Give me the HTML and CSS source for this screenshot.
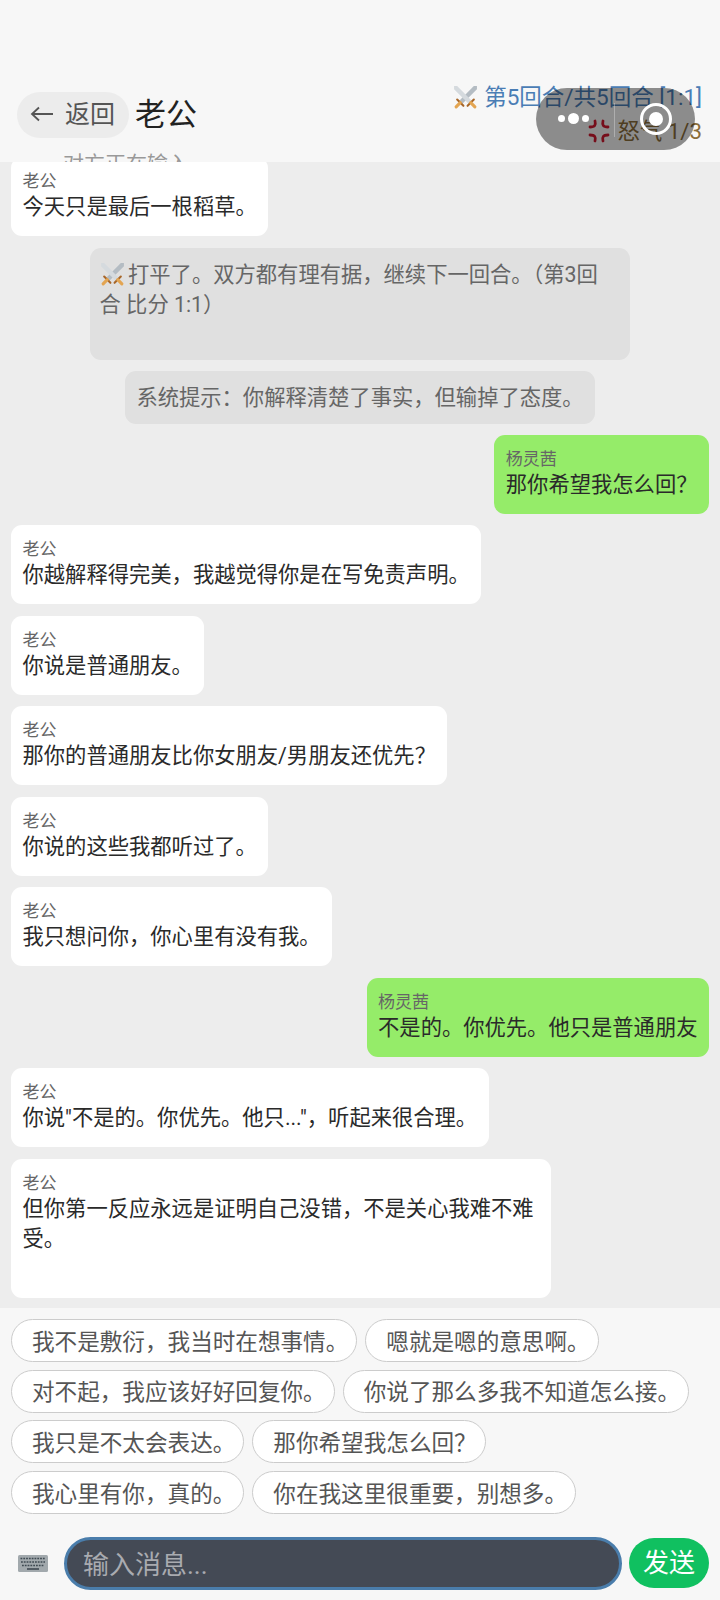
FILE: index.html
```html
<!DOCTYPE html>
<html lang="zh">
<head>
<meta charset="utf-8">
<title>老公</title>
<link rel="stylesheet" href="styles.css">
</head>
<body>
<div class="app">
  <header class="header">
    <div class="header-main">
      <div class="title-col">
        <div class="title-row">
          <button class="back">
            <svg class="back-arrow" viewBox="0 0 24 16" aria-hidden="true"><path d="M23 8 H2 M9 1.5 L2 8 L9 14.5" fill="none" stroke="#555" stroke-width="1.8"/></svg>
            <span>返回</span>
          </button>
          <h1 class="title">老公</h1>
        </div>
        <div class="typing">对方正在输入...</div>
      </div>
      <div class="stats">
        <div class="round">
          <svg class="swords" viewBox="0 0 24 24" aria-hidden="true">
            <path d="M23 1 L23 4 L9 18 L6 15 L20 1 Z" fill="#b4bcc3"/>
            <path d="M1 1 L1 4 L15 18 L18 15 L4 1 Z" fill="#d5dade"/>
            <path d="M4 14 L10 20 M20 14 L14 20" stroke="#a8672a" stroke-width="2" stroke-linecap="round"/>
            <path d="M7 17 L3 21 M17 17 L21 21" stroke="#e3a552" stroke-width="3" stroke-linecap="round"/>
          </svg>
          <span>第5回合/共5回合 [1:1]</span>
        </div>
        <div class="anger">
          <svg class="anger-icon" viewBox="0 0 24 24" aria-hidden="true">
            <g fill="none" stroke="#d01a30" stroke-width="2.8" stroke-linecap="round">
              <path d="M8 2 C9 6 8 8 3 8"/>
              <path d="M16 2 C15 6 16 8 21 8"/>
              <path d="M3 16 C8 16 9 18 8 22"/>
              <path d="M21 16 C16 16 15 18 16 22"/>
            </g>
          </svg>
          <span>怒气 1/3</span>
        </div>
      </div>
    </div>
    <div class="capsule">
      <div class="dots"><i class="dot"></i><i class="dot dot-big"></i><i class="dot"></i></div>
      <div class="capsule-line"></div>
      <div class="ring"><i class="ring-dot"></i></div>
    </div>
  </header>

  <main class="list">
    <div class="msg msg-first"><div class="name">老公</div><div class="text">今天只是最后一根稻草。</div></div>
    <div class="sys sys-round">
      <svg class="swords swords-inline" viewBox="0 0 24 24" aria-hidden="true">
        <path d="M23 1 L23 4 L9 18 L6 15 L20 1 Z" fill="#b4bcc3"/>
        <path d="M1 1 L1 4 L15 18 L18 15 L4 1 Z" fill="#d5dade"/>
        <path d="M4 14 L10 20 M20 14 L14 20" stroke="#a8672a" stroke-width="2" stroke-linecap="round"/>
        <path d="M7 17 L3 21 M17 17 L21 21" stroke="#e3a552" stroke-width="3" stroke-linecap="round"/>
      </svg>打平了。双方都有理有据，继续下一回合。（第3回合 比分 1:1）
    </div>
    <div class="sys sys-tip">系统提示：你解释清楚了事实，但输掉了态度。</div>
    <div class="msg msg-me"><div class="name">杨灵茜</div><div class="text">那你希望我怎么回？</div></div>
    <div class="msg"><div class="name">老公</div><div class="text">你越解释得完美，我越觉得你是在写免责声明。</div></div>
    <div class="msg"><div class="name">老公</div><div class="text">你说是普通朋友。</div></div>
    <div class="msg"><div class="name">老公</div><div class="text">那你的普通朋友比你女朋友/男朋友还优先？</div></div>
    <div class="msg"><div class="name">老公</div><div class="text">你说的这些我都听过了。</div></div>
    <div class="msg"><div class="name">老公</div><div class="text">我只想问你，你心里有没有我。</div></div>
    <div class="msg msg-me"><div class="name">杨灵茜</div><div class="text">不是的。你优先。他只是普通朋友</div></div>
    <div class="msg"><div class="name">老公</div><div class="text">你说"不是的。你优先。他只..."，听起来很合理。</div></div>
    <div class="msg msg-long"><div class="name">老公</div><div class="text">但你第一反应永远是证明自己没错，不是关心我难不难受。</div></div>
  </main>

  <section class="chips">
    <button class="chip">我不是敷衍，我当时在想事情。</button>
    <button class="chip">嗯就是嗯的意思啊。</button>
    <button class="chip">对不起，我应该好好回复你。</button>
    <button class="chip">你说了那么多我不知道怎么接。</button>
    <button class="chip">我只是不太会表达。</button>
    <button class="chip">那你希望我怎么回？</button>
    <button class="chip">我心里有你，真的。</button>
    <button class="chip">你在我这里很重要，别想多。</button>
  </section>

  <footer class="composer">
    <svg class="keyboard" viewBox="0 0 30 17" aria-hidden="true">
      <rect width="30" height="17" rx="1.5" fill="#a2a9ad"/>
      <g stroke="#3f4a52" stroke-width="1.6" stroke-dasharray="1.8 1">
        <path d="M2.5 3.5 H27.5"/><path d="M3 7 H27"/><path d="M4 10.5 H26"/>
      </g>
      <path d="M9 14 H21" stroke="#3f4a52" stroke-width="1.6"/>
    </svg>
    <div class="input">输入消息...</div>
    <button class="send">发送</button>
  </footer>
</div>
</body>
</html>
```

FILE: styles.css
```css
* { box-sizing: border-box; }
html, body { margin: 0; padding: 0; }
body {
  font-family: Roboto, "Noto Sans CJK SC", "Noto Sans", sans-serif;
  color: #333;
  background: #f7f7f7;
}
button { font: inherit; border: 0; margin: 0; }

.app {
  width: 720px;
  height: 1600px;
  display: flex;
  flex-direction: column;
  overflow: hidden;
}

.header {
  position: relative;
  height: 162px;
  flex: none;
  background: #f7f7f7;
  overflow: hidden;
  padding: 83px 17px 0;
}
.header-main { display: flex; justify-content: space-between; align-items: flex-start; }
.title-row { display: flex; align-items: center; gap: 6px; margin-top: 8px; }
.back {
  width: 112px;
  height: 46px;
  border-radius: 23px;
  background: #ececec;
  color: #555;
  font-size: 25px;
  line-height: 46px;
  padding: 0 0 0 13px;
  white-space: nowrap;
  display: flex;
  align-items: center;
  gap: 11px;
}
.back-arrow { width: 24px; height: 16px; flex: none; margin-top: -1px; }
.title { margin: 0; font-size: 31px; line-height: 46px; padding-top: 1px; font-weight: 400; color: #222; }
.typing { margin: 14px 0 0 46px; font-size: 21px; line-height: 24px; color: #999; }

.stats { margin-right: 1px; display: flex; flex-direction: column; align-items: flex-end; gap: 8px; margin-top: 1px; }
.round { display: flex; align-items: center; gap: 6px; font-size: 22.5px; line-height: 26px; color: #4a7db5; }
.anger { display: flex; align-items: center; gap: 7px; font-size: 22.3px; line-height: 26px; color: #8a6d3b; }
.swords { width: 25px; height: 25px; flex: none; }
.anger-icon { width: 24px; height: 24px; flex: none; }

.capsule {
  position: absolute;
  left: 536px;
  top: 88px;
  width: 159px;
  height: 62px;
  border-radius: 31px;
  background: rgba(0, 0, 0, .43);
}
.dots { position: absolute; left: 22px; top: 25px; display: flex; align-items: center; gap: 3px; }
.dot { width: 7px; height: 7px; border-radius: 50%; background: #fff; }
.dot-big { width: 11px; height: 11px; }
.capsule-line { position: absolute; left: 78px; top: 15px; width: 1px; height: 34px; background: rgba(255, 255, 255, .3); }
.ring {
  position: absolute;
  left: 104px;
  top: 15px;
  width: 32px;
  height: 32px;
  border: 3px solid #fff;
  border-radius: 50%;
  display: flex;
  align-items: center;
  justify-content: center;
}
.ring-dot { width: 14px; height: 14px; border-radius: 50%; background: #fff; }

.list {
  height: 1146px;
  flex: none;
  background: #ededed;
  padding: 0 11px;
  display: flex;
  flex-direction: column;
  align-items: flex-start;
  gap: 11.5px;
  overflow: hidden;
}
.msg {
  background: #fff;
  border-radius: 11px;
  padding: 13px 11.5px 13.5px;
  flex: none;
  max-width: 540px;
}
.msg-first { margin-top: -5px; }
.msg-me { background: #95ec69; align-self: flex-end; }
.msg-long { width: 540px; height: 139px; }
.name { font-size: 17px; line-height: 22px; color: #666; }
.text { font-size: 21.3px; line-height: 30.5px; color: #2a2a2a; }

.sys {
  align-self: center;
  background: #e0e0e0;
  border-radius: 11px;
  color: #666;
  font-size: 21.3px;
  line-height: 30.5px;
  flex: none;
}
.sys-round { width: 540px; height: 112px; padding: 12px 14px 8px 10px; margin-left: -1px; }
.sys-tip { padding: 12px 11.5px 8px; height: 53px; margin-bottom: -1px; }
.swords-inline { vertical-align: -5px; margin-right: 3.5px; }

.chips {
  flex: none;
  height: 206px;
  background: #f7f7f7;
  padding: 11px 11px 0;
  display: flex;
  flex-wrap: wrap;
  align-content: flex-start;
  gap: 7.7px 8px;
}
.chip {
  height: 43px;
  padding: 4px 8px 0 20px;
  background: #fff;
  border: 1.5px solid #ccc;
  border-radius: 22px;
  font-size: 22.6px;
  line-height: 34px;
  color: #555;
  white-space: nowrap;
}

.composer {
  flex: none;
  height: 86px;
  background: #f7f7f7;
  padding: 12px 11px 0 18px;
  display: flex;
  align-items: center;
}
.keyboard { width: 30px; height: 17px; flex: none; margin-right: 16px; }
.input {
  flex: 1;
  height: 53px;
  background: #444a55;
  border: 3px solid #4a7dab;
  border-radius: 27px;
  color: #a9abb0;
  font-size: 26px;
  line-height: 47px;
  padding: 2px 0 0 16px;
}
.send {
  width: 80px;
  height: 50px;
  margin-left: 7px;
  border-radius: 25px;
  background: #10c060;
  color: #fff;
  font-size: 26px;
  line-height: 50px;
  padding: 0;
}
```
